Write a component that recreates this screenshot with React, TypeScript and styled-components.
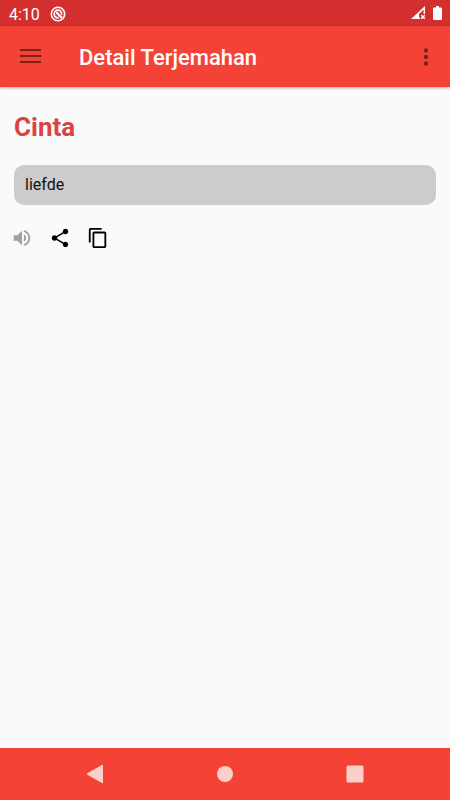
import React from "react";
import styled, { createGlobalStyle } from "styled-components";
import { MdVolumeUp, MdShare, MdContentCopy, MdMoreVert } from "react-icons/md";

const GlobalStyle = createGlobalStyle`
  * { box-sizing: border-box; }
  body { margin: 0; background: #fafafa; font-family: Roboto, "Liberation Sans", sans-serif; }
`;
const Screen = styled.div`
  min-height: 100vh; display: flex; flex-direction: column; background: #fafafa;
`;
const StatusBar = styled.div`
  height: 26px; padding: 2px 8px 0 9px; background: #d32f2f; color: #fff;
  display: flex; align-items: center; gap: 10px; font-size: 16px;
`;
const StatusIcons = styled.div`
  margin-left: auto; display: flex; align-items: center; gap: 7px; padding-bottom: 2px;
`;
const AppBar = styled.header`
  height: 61px; padding: 0 11px 0 20px; background: #f44336; display: flex; align-items: center;
  box-shadow: 0 1px 3px rgba(0, 0, 0, 0.3);
`;
const IconButton = styled.button<{ $color?: string }>`
  border: 0; padding: 0; background: none; display: flex; cursor: pointer;
  color: ${(p) => p.$color ?? "#000"};
`;
const Title = styled.h1`
  flex: 1; margin: 2px 0 0 38px; font-size: 22px; line-height: 28px; font-weight: 500; color: #fff;
`;
const Content = styled.main`
  flex: 1; padding: 24px 14px;
`;
const Word = styled.h2`
  margin: 0; font-size: 26px; line-height: 32px; font-weight: 700; color: #d94343;
`;
const Translation = styled.p`
  margin: 22px 0; padding: 10px 11px; border-radius: 10px; background: #cccccc;
  font-size: 16px; line-height: 20px; color: #111;
`;
const Actions = styled.div`
  display: flex; gap: 16px; margin-left: -3px;
`;
const NavBar = styled.nav`
  height: 52px; padding: 0 30px; background: #f44336; display: flex;
  align-items: center; justify-content: space-around;
`;

export default function App() {
  return (
    <>
      <GlobalStyle />
      <Screen>
        <StatusBar>
          <span>4:10</span>
          <svg width="16" height="16" viewBox="0 0 16 16" fill="none" stroke="currentColor" aria-hidden="true">
            <circle cx="8" cy="8" r="6.7" strokeWidth="1.6" />
            <path d="M11.6 8.8A3.8 3.8 0 1 0 8.8 11.6" strokeWidth="1.6" />
            <path d="M6.2 6.2L12 12" strokeWidth="2.4" />
          </svg>
          <StatusIcons>
            <svg width="15" height="14" viewBox="0 0 15 14" fill="currentColor" aria-hidden="true">
              <path fillRule="evenodd" d="M14 0V8H9V13H0ZM12.6 3.4L8 8V11.6H9V8H12.6Z" />
              <path d="M10.2 9.2L13.8 12.8M13.8 9.2L10.2 12.8" stroke="currentColor" strokeWidth="1.5" />
            </svg>
            <svg width="9" height="14" viewBox="0 0 9 14" fill="currentColor" aria-hidden="true">
              <path d="M3 0H6V1.5H8Q9 1.5 9 2.5V13Q9 14 8 14H1Q0 14 0 13V2.5Q0 1.5 1 1.5H3Z" />
            </svg>
          </StatusIcons>
        </StatusBar>
        <AppBar>
          <IconButton type="button" aria-label="Menu" $color="#79211b">
            <svg width="21" height="15" viewBox="0 0 21 15" fill="currentColor" aria-hidden="true">
              <path d="M0 0H21V2H0ZM0 6H21V8H0ZM0 12H21V14H0Z" />
            </svg>
          </IconButton>
          <Title>Detail Terjemahan</Title>
          <IconButton type="button" aria-label="More" $color="#79211b"><MdMoreVert size={26} /></IconButton>
        </AppBar>
        <Content>
          <Word>Cinta</Word>
          <Translation>liefde</Translation>
          <Actions>
            <IconButton type="button" aria-label="Listen" $color="#a0a0a0"><MdVolumeUp size={22} /></IconButton>
            <IconButton type="button" aria-label="Share"><MdShare size={22} /></IconButton>
            <IconButton type="button" aria-label="Copy"><MdContentCopy size={22} /></IconButton>
          </Actions>
        </Content>
        <NavBar>
          <IconButton type="button" aria-label="Back" $color="#fccfcc">
            <svg width="18" height="20" viewBox="0 0 18 20" fill="currentColor" aria-hidden="true">
              <path d="M16 1Q17 .5 17 1.7V18.3Q17 19.5 16 19L1.3 10.7Q.5 10 1.3 9.3Z" />
            </svg>
          </IconButton>
          <IconButton type="button" aria-label="Home" $color="#fccfcc">
            <svg width="18" height="18" viewBox="0 0 18 18" fill="currentColor" aria-hidden="true">
              <circle cx="9" cy="9" r="8" />
            </svg>
          </IconButton>
          <IconButton type="button" aria-label="Recent apps" $color="#fccfcc">
            <svg width="18" height="18" viewBox="0 0 18 18" fill="currentColor" aria-hidden="true">
              <rect x="0.5" y="0.5" width="17" height="17" rx="1.5" />
            </svg>
          </IconButton>
        </NavBar>
      </Screen>
    </>
  );
}
